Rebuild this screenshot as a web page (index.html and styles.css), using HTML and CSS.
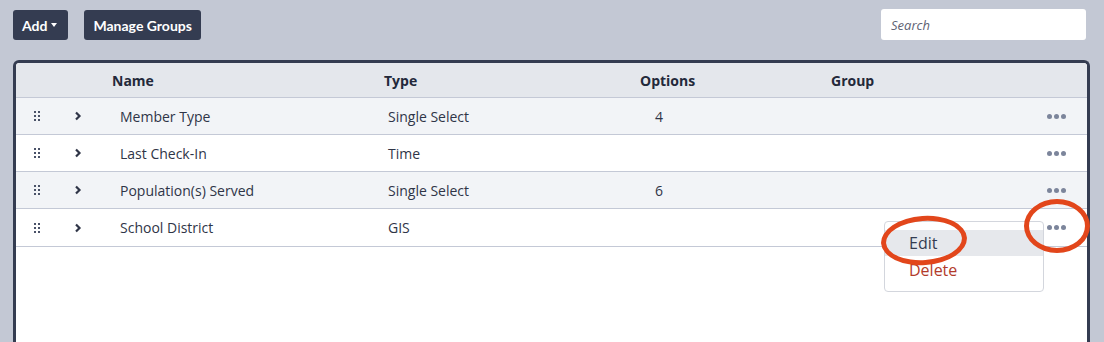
FILE: index.html
```html
<!DOCTYPE html>
<html lang="en">
  <head>
    <meta charset="UTF-8">
    <title>Custom Fields</title>
    <link rel="stylesheet" href="styles.css">
  </head>
  <body>
    <div class="page">
      <div class="toolbar">
        <button class="tb-btn tb-add">Add <span class="caret"></span></button>
        <button class="tb-btn">Manage Groups</button>
        <input class="search" type="text" placeholder="Search">
      </div>

      <div class="table-box">
        <div class="grid head">
          <div></div>
          <div></div>
          <div class="h-name">Name</div>
          <div class="h-type">Type</div>
          <div class="h-opts">Options</div>
          <div class="h-group">Group</div>
          <div></div>
        </div>

        <div class="grid row alt">
          <div class="handle"><span></span><span></span><span></span><span></span><span></span><span></span></div>
          <div class="chev"><svg width="8" height="10" viewBox="0 0 8 10"><polyline points="2,1.5 5.5,5 2,8.5" fill="none" stroke="#2f3547" stroke-width="2.2"/></svg></div>
          <div class="c-name">Member Type</div>
          <div class="c-type">Single Select</div>
          <div class="c-opts">4</div>
          <div></div>
          <div class="more"><i></i><i></i><i></i></div>
        </div>

        <div class="grid row">
          <div class="handle"><span></span><span></span><span></span><span></span><span></span><span></span></div>
          <div class="chev"><svg width="8" height="10" viewBox="0 0 8 10"><polyline points="2,1.5 5.5,5 2,8.5" fill="none" stroke="#2f3547" stroke-width="2.2"/></svg></div>
          <div class="c-name">Last Check-In</div>
          <div class="c-type">Time</div>
          <div class="c-opts"></div>
          <div></div>
          <div class="more"><i></i><i></i><i></i></div>
        </div>

        <div class="grid row alt">
          <div class="handle"><span></span><span></span><span></span><span></span><span></span><span></span></div>
          <div class="chev"><svg width="8" height="10" viewBox="0 0 8 10"><polyline points="2,1.5 5.5,5 2,8.5" fill="none" stroke="#2f3547" stroke-width="2.2"/></svg></div>
          <div class="c-name">Population(s) Served</div>
          <div class="c-type">Single Select</div>
          <div class="c-opts">6</div>
          <div></div>
          <div class="more"><i></i><i></i><i></i></div>
        </div>

        <div class="grid row last">
          <div class="handle"><span></span><span></span><span></span><span></span><span></span><span></span></div>
          <div class="chev"><svg width="8" height="10" viewBox="0 0 8 10"><polyline points="2,1.5 5.5,5 2,8.5" fill="none" stroke="#2f3547" stroke-width="2.2"/></svg></div>
          <div class="c-name">School District</div>
          <div class="c-type">GIS</div>
          <div class="c-opts"></div>
          <div></div>
          <div class="more open">
            <i></i><i></i><i></i>
            <div class="menu">
              <div class="menu-item active">Edit</div>
              <div class="menu-item danger">Delete</div>
            </div>
          </div>
        </div>
      </div>
    </div>

    <!-- annotation marks -->
    <div class="mark mark-edit"></div>
    <div class="mark mark-dots"></div>
  </body>
</html>
```

FILE: styles.css
```css
* {
    margin: 0;
    padding: 0;
    box-sizing: border-box;
}

body {
    background: #c3c8d4;
    font-family: 'Open Sans', sans-serif;
    color: #2f3547;
    width: 1104px;
    height: 342px;
    overflow: hidden;
    position: relative;
}

.page {
    padding: 9px 14px 0 13px;
}

.toolbar {
    display: flex;
    align-items: flex-start;
    gap: 16px;
    height: 31px;
    margin-bottom: 20px;
}

.tb-btn {
    margin-top: 1px;
    height: 30px;
    padding: 0 9px;
    background: #343c51;
    color: #fff;
    border: none;
    border-radius: 3px;
    font-family: 'Lato', sans-serif;
    font-weight: 700;
    font-size: 14px;
    display: flex;
    align-items: center;
    gap: 4px;
}

.tb-add {
    padding-right: 11px;
}

.caret {
    width: 0;
    height: 0;
    border-left: 3.5px solid transparent;
    border-right: 3.5px solid transparent;
    border-top: 4px solid #fff;
}

.search {
    margin-left: auto;
    margin-right: 4px;
    width: 205px;
    height: 31px;
    border: none;
    border-radius: 3px;
    background: #fff;
    padding: 0 10px;
    font-family: 'Open Sans', sans-serif;
    font-size: 13px;
    outline: none;
}

.search::placeholder {
    color: #5e6374;
    font-style: italic;
}

.table-box {
    background: #fff;
    border: 3px solid #343c51;
    border-bottom: none;
    border-radius: 6px 6px 0 0;
    height: 282px;
}

.grid {
    display: grid;
    grid-template-columns: 44px 40px 272px 256px 191px 1fr 60px;
    align-items: center;
    font-size: 14px;
}

.head {
    height: 35px;
    background: #e4e7ec;
    font-weight: 700;
    color: #23293a;
    border-bottom: 1px solid #c4c9d6;
    border-radius: 4px 4px 0 0;
}

.h-name { padding-left: 12px; }
.h-type { padding-left: 12px; }
.h-opts { padding-left: 12px; }
.h-group { padding-left: 12px; }

.row {
    height: 37px;
    background: #fff;
    border-bottom: 1px solid #c4c9d6;
}

.row.alt { background: #f2f4f7; }
.row.last { height: 38px; }

.c-name { padding-left: 20px; }
.c-type { padding-left: 16px; }
.c-opts { padding-left: 27px; }

.handle {
    justify-self: center;
    display: grid;
    grid-template-columns: 2px 2px;
    gap: 2px 2px;
    margin-left: -3px;
}

.handle span {
    width: 2px;
    height: 2px;
    background: #4a5268;
}

.chev {
    display: flex;
    justify-content: center;
    margin-left: -4px;
}

.more {
    display: flex;
    gap: 2px;
    justify-content: flex-end;
    padding-right: 21px;
    position: relative;
    height: 100%;
    align-items: center;
}

.more i {
    width: 5px;
    height: 5px;
    border-radius: 50%;
    background: #7c859b;
}

.row.last .more { align-items: flex-start; padding-top: 16px; }

.menu {
    position: absolute;
    top: 12px;
    right: 43px;
    width: 160px;
    height: 71px;
    background: #fff;
    border: 1px solid #d3d6dd;
    border-radius: 4px;
    padding-top: 8px;
    z-index: 2;
}

.menu-item {
    height: 26px;
    line-height: 26px;
    padding-left: 24px;
    font-size: 16px;
    color: #343c51;
}

.menu-item.active { background: #e6e8ec; }
.menu-item.danger { color: #b23b2b; line-height: 28px; }

.mark {
    position: absolute;
    border: 5px solid #e2461b;
    border-radius: 50%;
    z-index: 5;
}

.mark-edit {
    left: 881px;
    top: 216px;
    width: 86px;
    height: 49px;
    transform: rotate(-4deg);
}

.mark-dots {
    left: 1024px;
    top: 199px;
    width: 66px;
    height: 54px;
}
```
